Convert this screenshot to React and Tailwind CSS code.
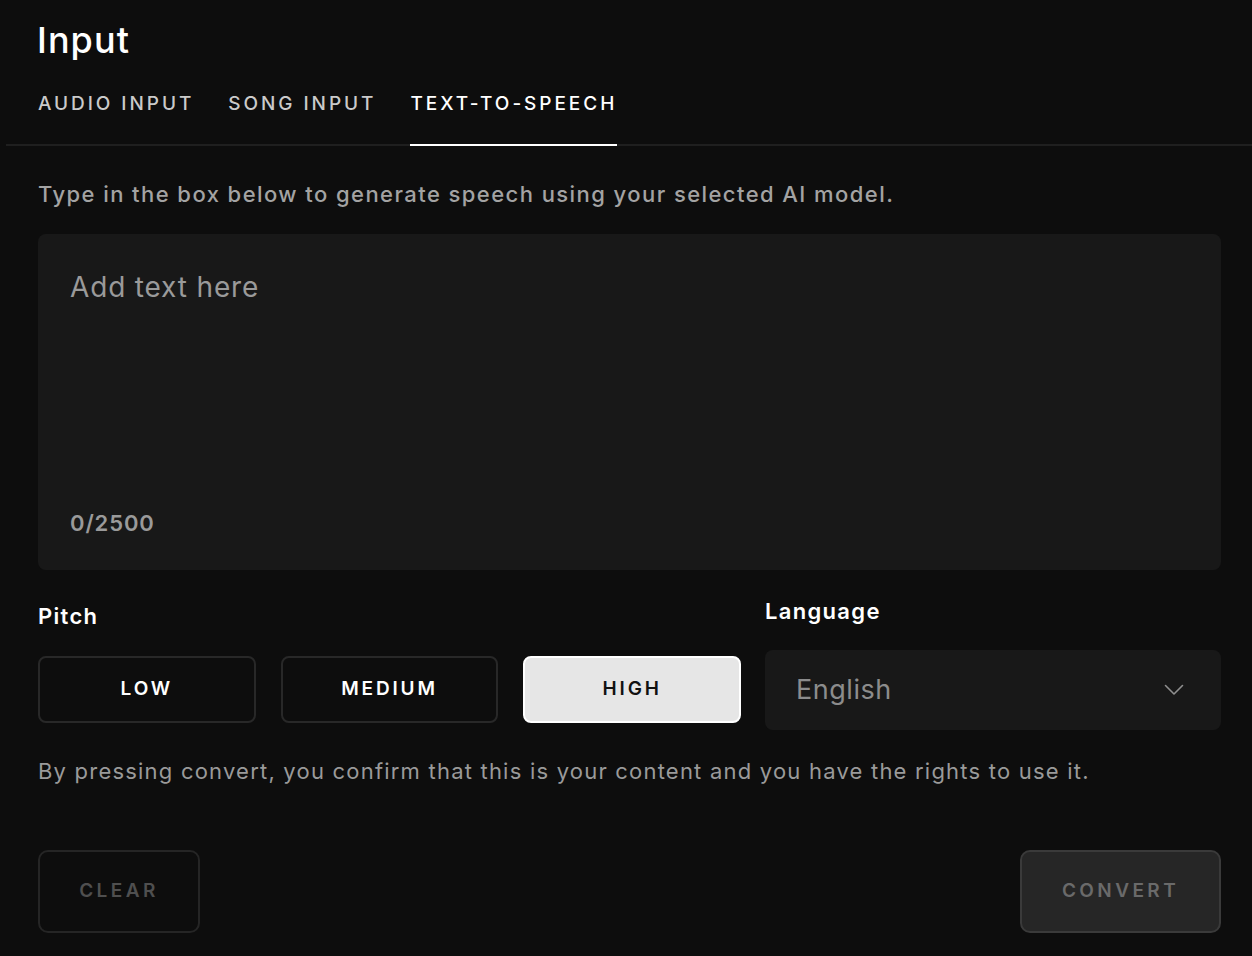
import { useState } from 'react'

const pitches = ['LOW', 'MEDIUM', 'HIGH']

export default function App() {
    const [text, setText] = useState('')
    const [pitch, setPitch] = useState('HIGH')

    return (
        <div className="min-h-screen bg-[#0d0d0d] text-white font-['Inter',sans-serif]">
            <div className="pl-[37px] pt-[18px]">
                <h1 className="text-[36px] font-medium leading-[44px] tracking-[0.03em]">Input</h1>
            </div>
            <div className="ml-[6px] mt-[10px] border-b-2 border-[#1f1f1f]">
                <div className="flex gap-[34px] pl-[32px]">
                    {['AUDIO INPUT', 'SONG INPUT', 'TEXT-TO-SPEECH'].map((t, i) => (
                        <button
                            key={t}
                            className={
                                'pt-[21px] pb-[29px] -mb-[2px] text-[19px] font-medium tracking-[0.155em] leading-[22px] border-b-2 ' +
                                (i === 2 ? 'text-white border-white' : 'text-[#cacaca] border-transparent')
                            }
                        >
                            {t}
                        </button>
                    ))}
                </div>
            </div>

            <div className="pl-[38px] pr-[31px]">
                <p className="mt-[34px] text-[22px] font-medium tracking-[0.065em] text-[#a3a3a3] leading-[28px]">
                    Type in the box below to generate speech using your selected AI model.
                </p>

                <div className="mt-[26px] h-[336px] rounded-[8px] bg-[#181818] px-[32px] pt-[37px] pb-[35px] flex flex-col">
                    <textarea
                        value={text}
                        onChange={(e) => setText(e.target.value)}
                        placeholder="Add text here"
                        className="flex-1 resize-none bg-transparent outline-none text-[28px] tracking-[0.03em] leading-[32px] text-white placeholder:text-[#9a9a9a]"
                    />
                    <div className="text-[22px] font-semibold tracking-[0.04em] text-[#9a9a9a] leading-[24px]">{text.length}/2500</div>
                </div>

                <div className="mt-[27px] flex items-center gap-[24px]">
                    <div className="w-[703px]">
                        <div className="text-[22px] font-semibold tracking-[0.06em] leading-[24px]">Pitch</div>
                        <div className="mt-[28px] grid grid-cols-3 gap-[25px]">
                            {pitches.map((p) => (
                                <button
                                    key={p}
                                    onClick={() => setPitch(p)}
                                    className={
                                        'h-[67px] rounded-[8px] border-2 text-[19px] font-semibold tracking-[0.15em] ' +
                                        (pitch === p
                                            ? 'bg-[#e6e6e6] border-white text-[#111]'
                                            : 'bg-[#0d0d0d] border-[#282828] text-white')
                                    }
                                >
                                    {p}
                                </button>
                            ))}
                        </div>
                    </div>
                    <div className="flex-1">
                        <div className="text-[22px] font-semibold tracking-[0.06em] leading-[28px]">Language</div>
                        <div className="mt-[25px] h-[80px] rounded-[8px] bg-[#181818] pl-[31px] pr-[37px] flex items-center justify-between">
                            <span className="text-[27px] tracking-[0.02em] text-[#8c8c8c]">English</span>
                            <svg width="20" height="12" viewBox="0 0 20 12" fill="none" stroke="#8f8f8f" strokeWidth="1.6" strokeLinecap="round" strokeLinejoin="round">
                                <path d="M1.5 1.5l8.5 8.5 8.5-8.5" />
                            </svg>
                        </div>
                    </div>
                </div>

                <p className="mt-[26px] text-[22px] tracking-[0.055em] text-[#9a9a9a] leading-[30px]">
                    By pressing convert, you confirm that this is your content and you have the rights to use it.
                </p>

                <div className="mt-[64px] flex justify-between">
                    <button className="w-[162px] h-[83px] rounded-[10px] border-2 border-[#252525] text-[19px] font-semibold tracking-[0.18em] text-[#4f4f4f]">
                        CLEAR
                    </button>
                    <button className="w-[201px] h-[83px] rounded-[10px] border-2 border-[#3a3a3a] bg-[#262626] text-[19px] font-semibold tracking-[0.18em] text-[#6a6a6a]">
                        CONVERT
                    </button>
                </div>
            </div>
        </div>
    )
}
